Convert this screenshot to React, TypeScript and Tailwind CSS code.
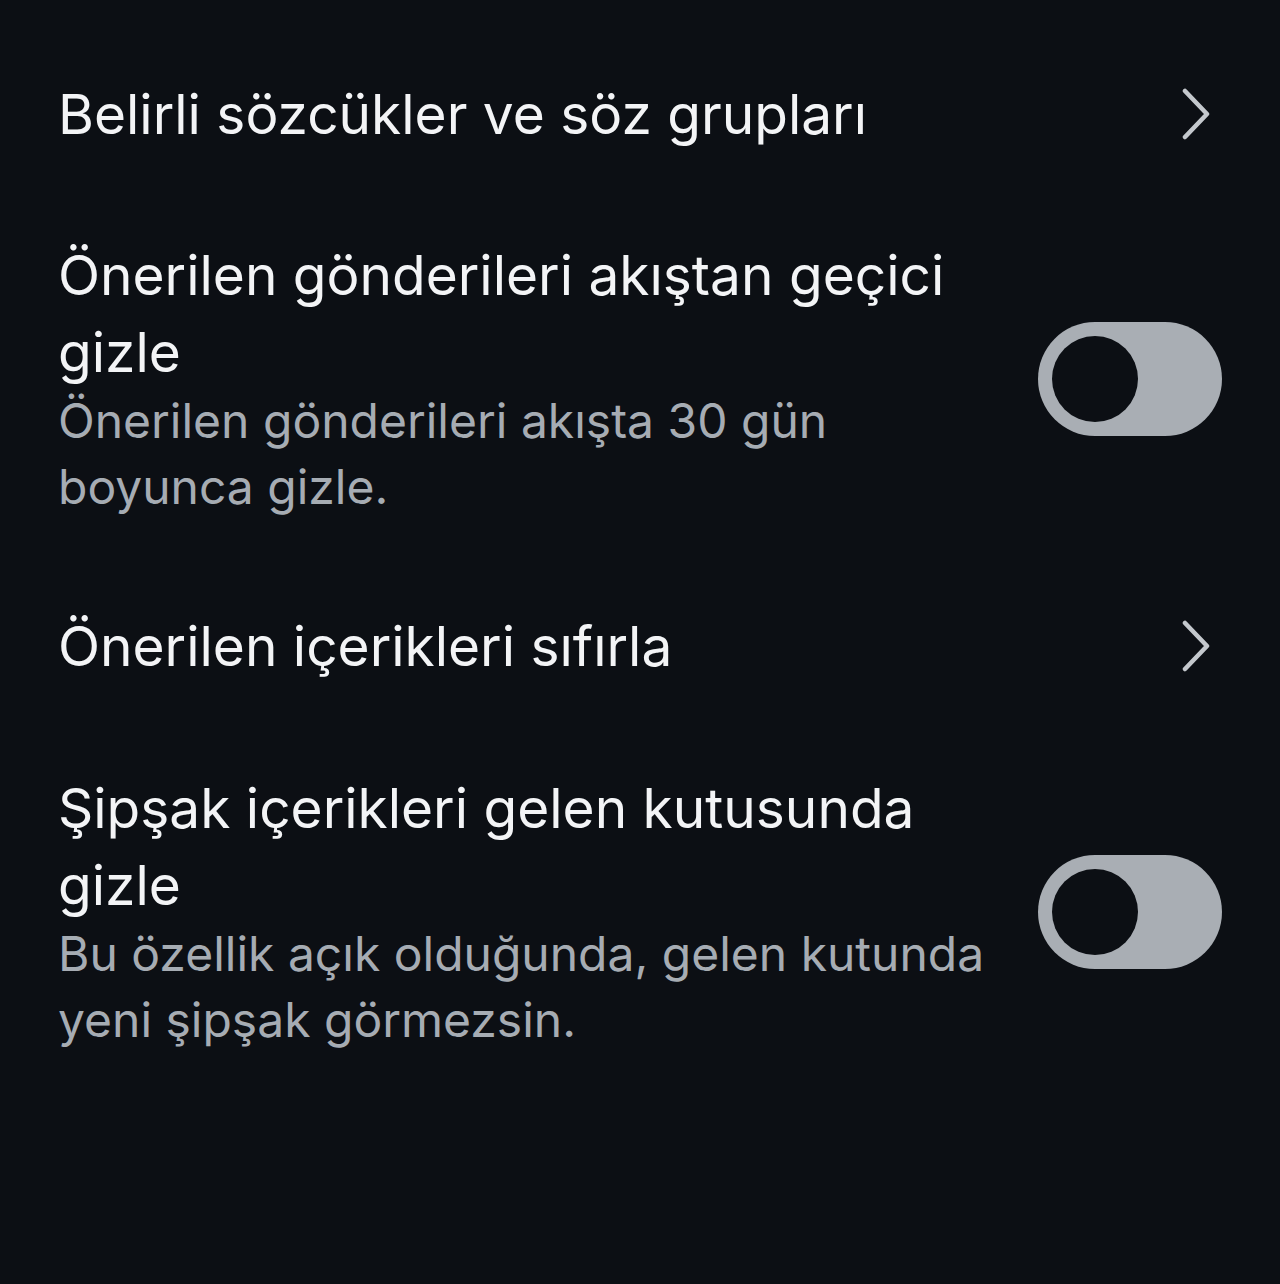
import React from "react"

function Chevron() {
  return (
    <svg width="32" height="52" viewBox="0 0 32 52" fill="none" className="shrink-0 mr-[10px]">
      <path d="M5 3 L27 26 L5 49" stroke="#c4c8cd" strokeWidth="4.5" strokeLinecap="round" strokeLinejoin="round" />
    </svg>
  )
}

function Toggle() {
  return (
    <div className="w-[184px] h-[114px] rounded-full bg-[#a9aeb4] flex items-center px-[14px] shrink-0">
      <div className="w-[86px] h-[86px] rounded-full bg-[#0c0f14]" />
    </div>
  )
}

export default function App() {
  return (
    <div
      className="w-[1280px] h-[1284px] bg-[#0c0f14] text-[#f3f4f6] pl-[58px] pr-[58px] pt-[72px]"
      style={{ fontFamily: "Inter, 'Noto Sans', sans-serif" }}
    >
      {/* Belirli sözcükler */}
      <div className="flex items-center justify-between h-[84px]">
        <span className="text-[55px] leading-[76px]">Belirli sözcükler ve söz grupları</span>
        <Chevron />
      </div>

      {/* Önerilen gönderileri gizle */}
      <div className="flex items-center justify-between mt-[81px]">
        <div className="w-[940px]">
          <div className="text-[55px] leading-[77px]">Önerilen gönderileri akıştan geçici gizle</div>
          <div className="text-[48px] leading-[66px] text-[#a6acb3] -mt-[3px]">Önerilen gönderileri akışta 30 gün boyunca gizle.</div>
        </div>
        <Toggle />
      </div>

      {/* Önerilen içerikleri sıfırla */}
      <div className="flex items-center justify-between mt-[84px] h-[84px]">
        <span className="text-[55px] leading-[76px]">Önerilen içerikleri sıfırla</span>
        <Chevron />
      </div>

      {/* Şipşak */}
      <div className="flex items-center justify-between mt-[82px]">
        <div className="w-[940px]">
          <div className="text-[55px] leading-[77px]">Şipşak içerikleri gelen kutusunda gizle</div>
          <div className="text-[48px] leading-[66px] text-[#a6acb3] -mt-[3px]">Bu özellik açık olduğunda, gelen kutunda yeni şipşak görmezsin.</div>
        </div>
        <Toggle />
      </div>
    </div>
  )
}
